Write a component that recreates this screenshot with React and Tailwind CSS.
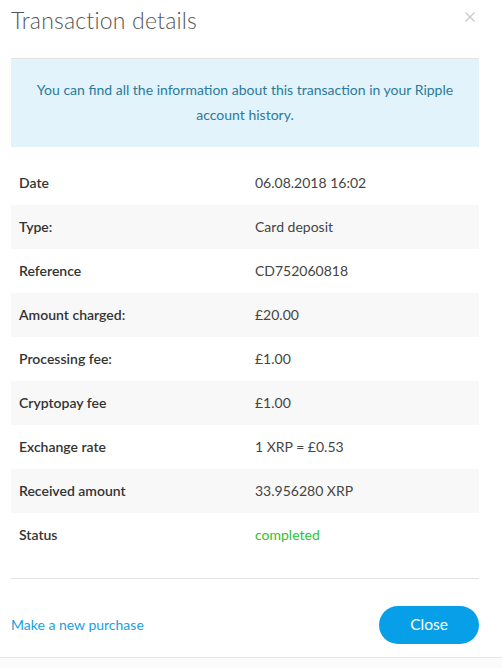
import React from "react";

const rows = [
  ["Date", "06.08.2018 16:02"],
  ["Type:", "Card deposit"],
  ["Reference", "CD752060818"],
  ["Amount charged:", "£20.00"],
  ["Processing fee:", "£1.00"],
  ["Cryptopay fee", "£1.00"],
  ["Exchange rate", "1 XRP = £0.53"],
  ["Received amount", "33.956280 XRP"],
  ["Status", "completed"],
];

export default function App() {
  return (
    <div className="w-[502px] h-[668px] bg-white flex flex-col font-['Lato','Open_Sans',sans-serif] overflow-hidden">
      <div className="pl-[11px] pr-[23px] flex-1">
        {/* Header */}
        <div className="flex items-start justify-between h-[58px]">
          <h1 className="text-[23px] font-light text-[#555] leading-none pt-[9px] tracking-[0.2px]">
            Transaction details
          </h1>
          <button className="mt-[12px] mr-[4px] text-[#c8c8c8]">
            <svg width="10" height="10" viewBox="0 0 10 10" stroke="currentColor" strokeWidth="1.2">
              <path d="M0.5 0.5L9.5 9.5M9.5 0.5L0.5 9.5" />
            </svg>
          </button>
        </div>

        {/* Info box */}
        <div className="border-t border-[#e4e4e4] bg-[#e2f3fb] h-[89px] flex items-center justify-center px-6 pb-[2px]">
          <p className="text-[14px] leading-[25px] text-[#2b7a9c] text-center">
            You can find all the information about this transaction in your Ripple account history.
          </p>
        </div>

        {/* Rows */}
        <div className="mt-[14px]">
          {rows.map(([label, value], i) => (
            <div
              key={label}
              className={`flex items-center h-[44px] text-[14px] pb-[2px] ${i % 2 === 1 ? "bg-[#f8f8f8]" : ""}`}
            >
              <div className="w-[244px] pl-[8px] font-semibold text-[#333]">{label}</div>
              <div className={value === "completed" ? "text-[#2fc22f]" : "text-[#444]"}>{value}</div>
            </div>
          ))}
        </div>

        <div className="border-t border-[#e2e2e2] mt-[21px]" />

        {/* Footer */}
        <div className="flex items-center justify-between mt-[27px]">
          <a className="text-[14px] text-[#1a9fe0] cursor-pointer pb-[2px]">Make a new purchase</a>
          <button className="w-[100px] h-[38px] rounded-full bg-[#07a0e8] text-white text-[15.5px] pb-[1px]">
            Close
          </button>
        </div>
      </div>
      <div className="h-[11px] border-t border-[#e6e6e6] bg-[#fbfbfb]" />
    </div>
  );
}
